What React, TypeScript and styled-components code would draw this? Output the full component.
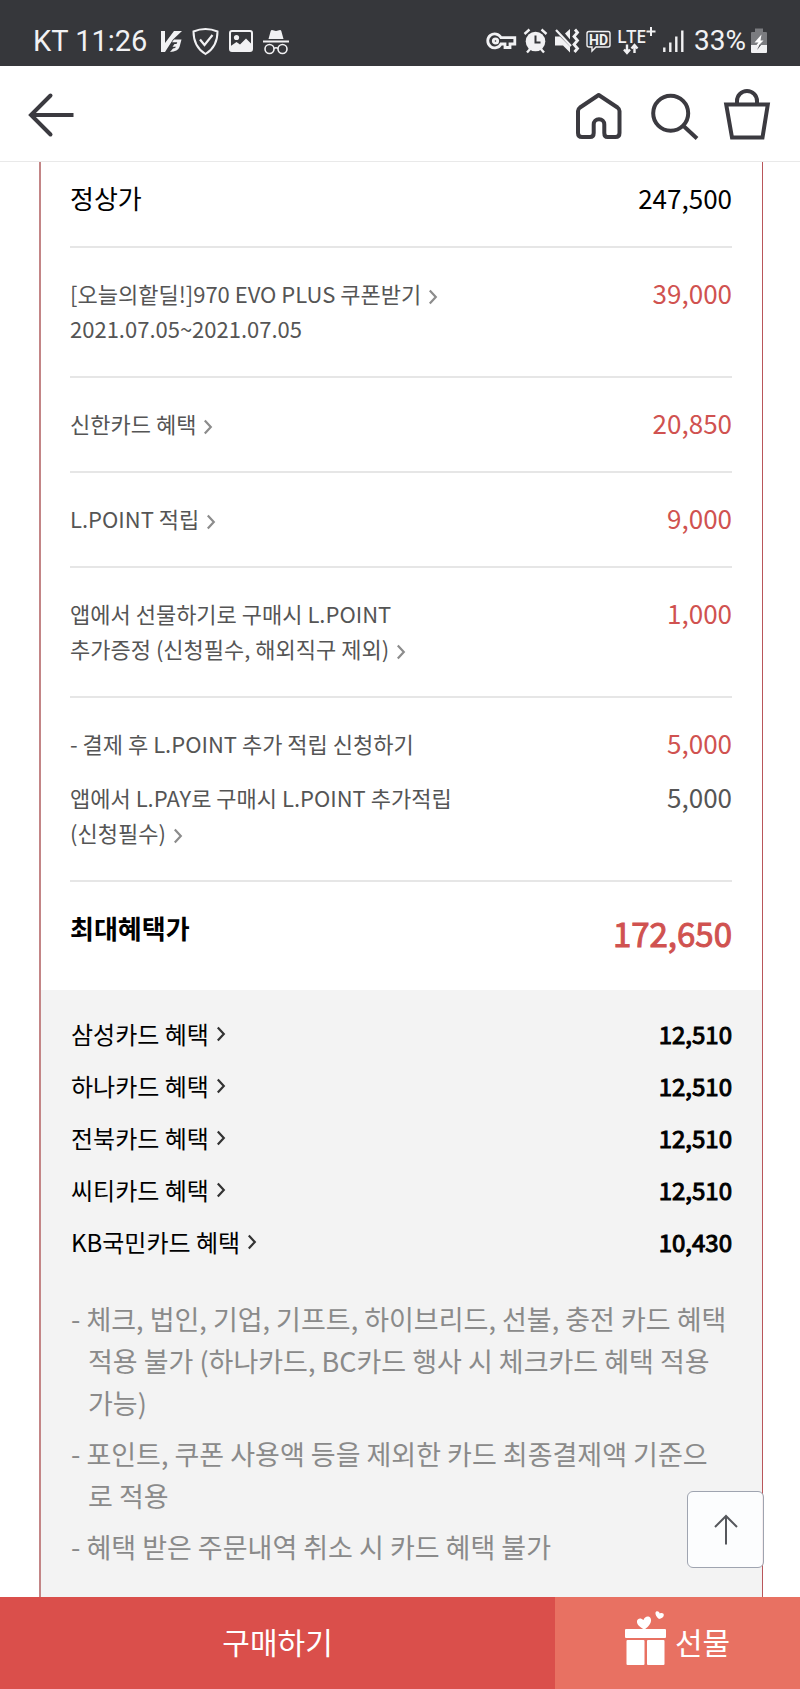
import React from "react";
import styled, { createGlobalStyle } from "styled-components";

const RED = "#d05250";

const GlobalStyle = createGlobalStyle`
  * { box-sizing: border-box; }
  body {
    margin: 0;
    background: #fff;
    color: #000;
    font-family: "Noto Sans CJK KR", "Noto Sans", sans-serif;
  }
  button { font: inherit; border: 0; padding: 0; background: none; cursor: pointer; }
  a { color: inherit; text-decoration: none; }
  ul { list-style: none; margin: 0; padding: 0; }
  svg { display: block; flex: none; overflow: visible; }
`;

const Page = styled.div`
  min-height: 100vh;
  display: flex;
  flex-direction: column;
`;

const StatusBar = styled.div`
  display: flex;
  justify-content: space-between;
  align-items: flex-end;
  height: 66px;
  padding: 0 33px 11px;
  background: #36373b;
  color: #f1f1f3;
  font-family: Roboto, sans-serif;
  font-size: 28px;
  line-height: 28px;
`;

const StatusGroup = styled.div<{ $gap: number }>`
  display: flex;
  align-items: center;
  gap: ${(p) => p.$gap}px;
`;

const Clock = styled.span`
  font-size: 29px;
`;

const Header = styled.header`
  display: flex;
  justify-content: space-between;
  align-items: center;
  height: 96px;
  padding: 0 28px 0 27px;
  border-bottom: 1px solid #e9e9e9;
`;

const HeaderTools = styled.nav`
  display: flex;
  gap: 24px;
`;

const Card = styled.main`
  flex: 1;
  display: flex;
  flex-direction: column;
  margin: 0 37px 0 39px;
  border-left: 2px solid #c38586;
  border-right: 1px solid #b9565a;
`;

const Prices = styled.ul`
  padding: 0 30px 0 29px;
`;

const PriceItem = styled.li<{ $first?: boolean }>`
  display: flex;
  flex-direction: column;
  gap: 19px;
  padding: ${(p) => (p.$first ? 19 : 28)}px 0 30px;
  border-bottom: 2px solid #e6e6e6;
`;

const Line = styled.div`
  display: flex;
  justify-content: space-between;
  align-items: flex-start;
  min-height: 35px;
`;

const Label = styled.span`
  flex: 0 1 60%;
  color: #555;
  font-size: 22px;
  line-height: 35px;
  word-break: keep-all;

  svg { display: inline-block; margin-left: 8px; vertical-align: -1px; color: #8c8c8c; }
`;

const ListPrice = styled.span`
  font-size: 26px;
  line-height: 33px;
`;

const Amount = styled.span<{ $muted?: boolean }>`
  color: ${(p) => (p.$muted ? "#555" : RED)};
  font-size: 26px;
  line-height: 33px;
`;

const Total = styled.div`
  display: flex;
  justify-content: space-between;
  padding: 28px 30px 34px 29px;
  line-height: 35px;
`;

const TotalLabel = styled.strong`
  font-size: 26px;
`;

const TotalAmount = styled.strong`
  color: ${RED};
  font-size: 33px;
  line-height: 46px;
  font-weight: 400;
  -webkit-text-stroke: 1px currentColor;
`;

const CardPanel = styled.section`
  flex: 1;
  padding: 26px 30px 29px;
  background: #f3f3f3;
`;

const CardList = styled.ul`
  display: flex;
  flex-direction: column;
  gap: 16px;
  margin-bottom: 38px;
`;

const CardRow = styled.li`
  display: flex;
  justify-content: space-between;
  font-size: 24px;
  line-height: 36px;
`;

const CardLink = styled.a`
  display: flex;
  align-items: center;
  gap: 8px;

  svg { color: #333; }
`;

const CardAmount = styled.strong`
  font-weight: 400;
  -webkit-text-stroke: 1px currentColor;
`;

const Notes = styled.ul`
  display: flex;
  flex-direction: column;
  gap: 9px;
  color: #8a8a8a;
  font-size: 27px;
  line-height: 42px;
`;

const Note = styled.li`
  padding-left: 17px;
  text-indent: -17px;
`;

const BuyBar = styled.footer`
  position: sticky;
  bottom: 0;
  display: grid;
  grid-template-columns: 34fr 15fr;
  height: 92px;
`;

const BuyButton = styled.button<{ $gift?: boolean }>`
  display: flex;
  justify-content: center;
  align-items: center;
  gap: 9px;
  padding-bottom: 4px;
  background: ${(p) => (p.$gift ? "#e87162" : "#da4f4b")};
  color: #fff;
  font-size: 30px;
`;

const TopButton = styled.button`
  position: absolute;
  right: 36px;
  bottom: calc(100% + 29px);
  display: grid;
  place-items: center;
  width: 77px;
  height: 77px;
  border: 1px solid #9fa4b0;
  border-radius: 6px;
  background: rgba(253, 254, 255, 0.9);
`;

const Chevron = () => (
  <svg width="8" height="14" viewBox="0 0 8 14" fill="none" stroke="currentColor" strokeWidth="2.200" aria-hidden="true">
    <path d="M.8 .5 L6.800 7 L.8 13.500" />
  </svg>
);

const V3Icon = () => (
  <svg width="21" height="28" viewBox="0 0 21 28" fill="currentColor" aria-hidden="true">
    <path d="M0 4 H4 V16 L13 4 H21 L12 12.500 L4 25 H0 Z" />
    <path d="M13 12.500 H20.500 L18.500 20 Q17 24.500 9 25 L12 21.500 Q14.500 21.500 15 19.800 H11.500 L13.500 17 H15.500 L16.300 15.300 H11 Z" />
  </svg>
);

const ShieldIcon = () => (
  <svg width="27" height="28" viewBox="0 0 27 28" fill="none" stroke="currentColor" strokeWidth="2" aria-hidden="true">
    <path d="M13.500 2 C9 2 5 3 1.500 4.500 C1.500 15 5 22 13.500 27 C22 22 25.500 15 25.500 4.500 C22 3 18 2 13.500 2 Z" />
    <path d="M8 12.500 L12.500 18 L20.500 8" strokeWidth="2.200" />
  </svg>
);

const PictureIcon = () => (
  <svg width="24" height="28" viewBox="0 0 24 28" aria-hidden="true">
    <rect x="1" y="4" width="22" height="20" rx="2" fill="none" stroke="currentColor" strokeWidth="2" />
    <circle cx="7.500" cy="10.500" r="2.600" fill="currentColor" />
    <path d="M1 19.500 L7.500 15 L11 17.500 L17 11.500 L23 17.500 V24 H1 Z" fill="currentColor" />
  </svg>
);

const IncognitoIcon = () => (
  <svg width="26" height="28" viewBox="0 0 26 28" aria-hidden="true">
    <path d="M9 3 L13 4 L17 3 Q18 3 18.300 4 L20.500 12 H5.500 L7.700 4 Q8 3 9 3 Z" fill="currentColor" />
    <path d="M0 14.500 H26" stroke="currentColor" strokeWidth="2" />
    <g fill="none" stroke="currentColor" strokeWidth="1.600">
      <circle cx="6.500" cy="22" r="4.500" />
      <circle cx="19.500" cy="22" r="4.500" />
      <path d="M11 21.500 Q13 20 15 21.500" />
    </g>
  </svg>
);

const KeyIcon = () => (
  <svg width="28" height="28" viewBox="0 0 28 28" fill="none" stroke="currentColor" strokeWidth="2.800" aria-hidden="true">
    <path d="M13 10.700 A7 7 0 1 0 13 17 H17 V20.500 H22 V17 H26.800 V10.700 Z" />
    <circle cx="7.500" cy="14" r="2.200" />
  </svg>
);

const AlarmIcon = () => (
  <svg width="25" height="28" viewBox="0 0 25 28" aria-hidden="true">
    <circle cx="12.500" cy="14.500" r="9.800" fill="currentColor" />
    <path d="M1.500 7 L6.500 2.500 M23.500 7 L18.500 2.500 M4 25.500 L8 21 M21 25.500 L17 21" stroke="currentColor" strokeWidth="2.400" />
    <path d="M12.500 8.500 V15.500 H17.500" fill="none" stroke="#36373b" strokeWidth="2" />
  </svg>
);

const MuteIcon = () => (
  <svg width="24" height="28" viewBox="0 0 24 28" aria-hidden="true">
    <path d="M0 9.500 H5 L15 19.500 V25.500 L8 18.500 H0 Z M10 6.500 L15 2 V12.500 Z" fill="currentColor" />
    <path d="M1 3 L16 19" stroke="currentColor" strokeWidth="2.200" />
    <path d="M20 2.500 L22.500 5.500 L19 9.500 L22.500 13.500 L19 17.500 L22.500 21.500 L19.500 25" fill="none" stroke="currentColor" strokeWidth="2.800" />
  </svg>
);

const HdIcon = () => (
  <svg width="25" height="28" viewBox="0 0 25 28" aria-label="HD">
    <path d="M3 4.500 H22 Q24 4.500 24 6.500 V18 Q24 20 22 20 H10 L6 24 V20 H3 Q1 20 1 18 V6.500 Q1 4.500 3 4.500 Z" fill="none" stroke="currentColor" strokeWidth="1.400" />
    <text x="12.500" y="17.500" textAnchor="middle" fontFamily="Roboto" fontSize="14" fontWeight="700" fill="currentColor">HD</text>
  </svg>
);

const LteIcon = () => (
  <svg width="38" height="28" viewBox="0 0 38 28" aria-label="LTE+">
    <text x="-1" y="15.500" fontFamily="Noto Sans" fontSize="18" fontWeight="500" fill="currentColor">LTE</text>
    <path d="M28.500 4.500 H37.500 M33 0 V9" stroke="currentColor" strokeWidth="2" />
    <path d="M9 17.500 V25 M6 22.500 L9 26 L12 22.500 M16.500 26 V19 M13.500 21.500 L16.500 18 L19.500 21.500" fill="none" stroke="currentColor" strokeWidth="2.400" />
  </svg>
);

const SignalIcon = () => (
  <svg width="21" height="28" viewBox="0 0 21 28" stroke="currentColor" strokeWidth="2.400" aria-hidden="true">
    <path d="M1.300 20.500 V25 M7.300 15.500 V25 M13.300 9.500 V25 M19.300 3.500 V25" />
  </svg>
);

const BatteryIcon = () => (
  <svg width="16" height="28" viewBox="0 0 16 28" aria-hidden="true">
    <path d="M4 1.500 H12 V5 H15 Q16 5 16 6 V18 H0 V6 Q0 5 1 5 H4 Z" fill="#7b7c80" />
    <path d="M0 18 H16 V25 Q16 26 15 26 H1 Q0 26 0 25 Z" fill="currentColor" />
    <path d="M10.500 7.500 L3.500 15.500 H7.500 L5.500 18 H8 L12.500 13.500 H9.500 Z" fill="#fff" />
    <path d="M8.500 18 L6 23 L10 18 Z" fill="#36373b" />
  </svg>
);

const BackIcon = () => (
  <svg width="48" height="48" viewBox="0 0 48 48" fill="none" stroke="#3b3a40" strokeWidth="4" aria-hidden="true">
    <path d="M46.500 25 H4" />
    <path d="M23.500 5.500 L4 25 L23.500 44.500" strokeLinecap="round" />
  </svg>
);

const HomeIcon = () => (
  <svg width="50" height="54" viewBox="0 -4 50 54" fill="none" stroke="#3b3a40" strokeWidth="4" strokeLinejoin="round" aria-hidden="true">
    <path d="M24.700 4 L43.500 16.500 Q45.500 18 45.500 20 V42 Q45.500 46 41.500 46 H33.500 Q30.300 46 30.300 42 V33.500 A5.300 5.300 0 0 0 19.700 33.500 V42 Q19.700 46 16 46 H8 Q4 46 4 42 V20 Q4 18 6 16.500 Z" />
  </svg>
);

const SearchIcon = () => (
  <svg width="50" height="54" viewBox="0 -4 50 54" fill="none" stroke="#3b3a40" strokeWidth="4" aria-hidden="true">
    <circle cx="22.700" cy="22.300" r="17.500" />
    <path d="M35 34.500 L49 47.500" />
  </svg>
);

const BagIcon = () => (
  <svg width="50" height="54" viewBox="0 0 50 54" fill="none" stroke="#3b3a40" strokeWidth="4" aria-hidden="true">
    <path d="M4.200 17.500 H45.800 L40.500 50.500 H10 Z" />
    <path d="M15 17 V14 A10 10 0 0 1 35 14 V17" />
  </svg>
);

const UpIcon = () => (
  <svg width="24" height="30" viewBox="0 0 24 30" fill="none" stroke="#55575c" strokeWidth="2" aria-hidden="true">
    <path d="M12 29.500 V.5 M1 12 L12 1 L23 12" />
  </svg>
);

const GiftIcon = () => (
  <svg width="41" height="60" viewBox="0 6 41 60" fill="#fff" aria-hidden="true">
    <rect x="0" y="24" width="41" height="9" rx="1" />
    <rect x="1.500" y="35" width="18" height="25" rx="1" />
    <rect x="22" y="35" width="17.500" height="25" rx="1" />
    <path d="M19.500 24.500 C15 22.500 11.500 19.500 12 16 C12.500 13 16 12.500 18.500 15 C19.500 11.500 23.500 10.500 25.500 13 C27.500 16.500 24 21.500 19.500 24.500 Z" />
    <path d="M34 14 C31.500 12 30 9.500 30.500 7.500 C31.200 5.500 34 5.700 34.800 8.500 C37 7.500 39 8.500 38.800 10.300 C38.500 12.500 36.500 13.500 34 14 Z" />
  </svg>
);

type Benefit = { text: string; more?: string; amount: string; muted?: boolean; link?: boolean };

const benefits: Benefit[][] = [
  [{ text: "[오늘의핱딜!]970 EVO PLUS 쿠폰받기", more: "2021.07.05~2021.07.05", amount: "39,000", link: true }],
  [{ text: "신한카드 혜택", amount: "20,850", link: true }],
  [{ text: "L.POINT 적립", amount: "9,000", link: true }],
  [{ text: "앱에서 선물하기로 구매시 L.POINT 추가증정 (신청필수, 해외직구 제외)", amount: "1,000", link: true }],
  [
    { text: "- 결제 후 L.POINT 추가 적립 신청하기", amount: "5,000" },
    { text: "앱에서 L.PAY로 구매시 L.POINT 추가적립 (신청필수)", amount: "5,000", muted: true, link: true },
  ],
];

const cards = [
  ["삼성카드 혜택", "12,510"],
  ["하나카드 혜택", "12,510"],
  ["전북카드 혜택", "12,510"],
  ["씨티카드 혜택", "12,510"],
  ["KB국민카드 혜택", "10,430"],
];

const notes = [
  "- 체크, 법인, 기업, 기프트, 하이브리드, 선불, 충전 카드 혜택 적용 불가 (하나카드, BC카드 행사 시 체크카드 혜택 적용 가능)",
  "- 포인트, 쿠폰 사용액 등을 제외한 카드 최종결제액 기준으로 적용",
  "- 혜택 받은 주문내역 취소 시 카드 혜택 불가",
];

export default function App() {
  return (
    <Page>
      <GlobalStyle />
      <StatusBar>
        <StatusGroup $gap={14}>
          <Clock>KT 11:26</Clock>
          <StatusGroup $gap={10}>
            <V3Icon />
            <ShieldIcon />
            <PictureIcon />
            <IncognitoIcon />
          </StatusGroup>
        </StatusGroup>
        <StatusGroup $gap={10}>
          <StatusGroup $gap={7}>
            <KeyIcon />
            <AlarmIcon />
            <MuteIcon />
            <HdIcon />
            <LteIcon />
            <SignalIcon />
          </StatusGroup>
          <StatusGroup $gap={5}>
            <span>33%</span>
            <BatteryIcon />
          </StatusGroup>
        </StatusGroup>
      </StatusBar>
      <Header>
        <button type="button" aria-label="뒤로"><BackIcon /></button>
        <HeaderTools>
          <a href="#home" aria-label="홈"><HomeIcon /></a>
          <a href="#search" aria-label="검색"><SearchIcon /></a>
          <a href="#cart" aria-label="장바구니"><BagIcon /></a>
        </HeaderTools>
      </Header>
      <Card>
        <Prices>
          <PriceItem $first>
            <Line>
              <ListPrice>정상가</ListPrice>
              <ListPrice>247,500</ListPrice>
            </Line>
          </PriceItem>
          {benefits.map((group) => (
            <PriceItem key={group[0].text}>
              {group.map((b) => (
                <Line key={b.text}>
                  <Label>
                    {b.link ? <a href="#benefit">{b.text}<Chevron /></a> : b.text}
                    {b.more && <><br />{b.more}</>}
                  </Label>
                  <Amount $muted={b.muted}>{b.amount}</Amount>
                </Line>
              ))}
            </PriceItem>
          ))}
        </Prices>
        <Total>
          <TotalLabel>최대혜택가</TotalLabel>
          <TotalAmount>172,650</TotalAmount>
        </Total>
        <CardPanel>
          <CardList>
            {cards.map(([name, amount]) => (
              <CardRow key={name}>
                <CardLink href="#card">{name}<Chevron /></CardLink>
                <CardAmount>{amount}</CardAmount>
              </CardRow>
            ))}
          </CardList>
          <Notes>
            {notes.map((n) => <Note key={n}>{n}</Note>)}
          </Notes>
        </CardPanel>
      </Card>
      <BuyBar>
        <TopButton type="button" aria-label="맨 위로"><UpIcon /></TopButton>
        <BuyButton type="button">구매하기</BuyButton>
        <BuyButton type="button" $gift><GiftIcon />선물</BuyButton>
      </BuyBar>
    </Page>
  );
}
